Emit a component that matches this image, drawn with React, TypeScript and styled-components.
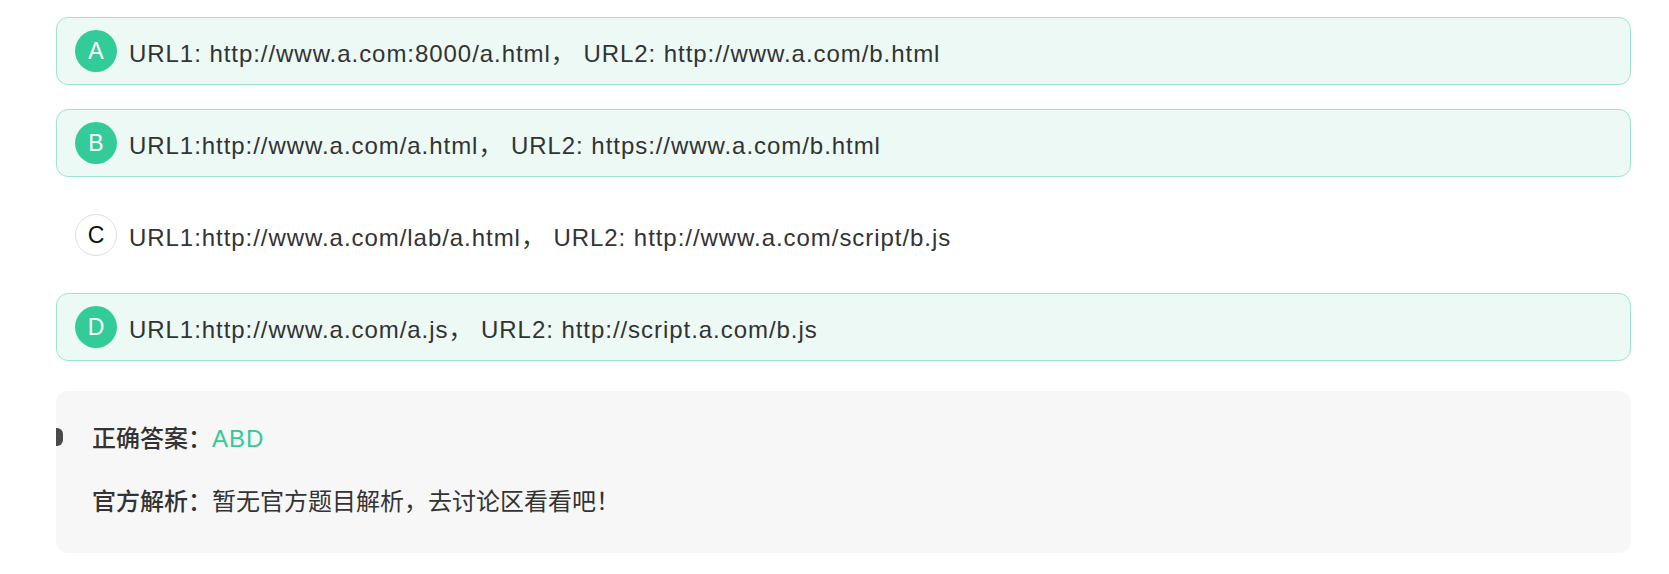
import React from "react";
import styled, { createGlobalStyle, css } from "styled-components";

const GlobalStyle = createGlobalStyle`
  body {
    margin: 0;
    background: #fff;
    font-family: "Liberation Sans", "Noto Sans CJK SC", sans-serif;
    color: #333;
  }
`;

const Page = styled.div`
  padding: 17px 38px 20px 56px;
  display: flex;
  flex-direction: column;
`;

const OptionList = styled.div`
  display: flex;
  flex-direction: column;
  gap: 24px;
`;

const OptionRow = styled.div<{ $selected: boolean }>`
  height: 68px;
  box-sizing: border-box;
  display: flex;
  align-items: center;
  gap: 12px;
  padding-left: 18px;
  border-radius: 12px;
  border: 1px solid transparent;
  ${(p) =>
    p.$selected &&
    css`
      background: #ecf9f5;
      border-color: #9fe4cb;
    `};
`;

const Letter = styled.span<{ $selected: boolean }>`
  width: 42px;
  height: 42px;
  box-sizing: border-box;
  border-radius: 50%;
  display: flex;
  align-items: center;
  justify-content: center;
  font-size: 23px;
  flex-shrink: 0;
  ${(p) =>
    p.$selected
      ? css`
          background: #33cb98;
          color: #fff;
        `
      : css`
          background: #fff;
          color: #111;
          border: 1px solid #dedede;
        `};
`;

const OptionText = styled.span`
  font-size: 24px;
  letter-spacing: 0.95px;
  color: #333;
  white-space: pre;
`;

const Analysis = styled.div`
  position: relative;
  overflow: hidden;
  margin-top: 30px;
  background: #f7f7f7;
  border-radius: 12px;
  padding: 34px 36px 41px;
  display: flex;
  flex-direction: column;
  gap: 37px;
`;

const Marker = styled.span`
  position: absolute;
  left: -9px;
  top: 37px;
  width: 16px;
  height: 18px;
  border-radius: 6px;
  background: #4a4a4a;
`;

const InfoLine = styled.div`
  font-size: 24px;
  line-height: 24px;
  color: #333;
  font-family: "Noto Sans CJK SC", "Liberation Sans", sans-serif;
`;

const Label = styled.span`
  font-weight: 500;
`;

const Answer = styled.span`
  color: #33c999;
  font-family: "Liberation Sans", sans-serif;
  letter-spacing: 0.95px;
`;

const options = [
  { key: "A", text: "URL1: http://www.a.com:8000/a.html， URL2: http://www.a.com/b.html", selected: true },
  { key: "B", text: "URL1:http://www.a.com/a.html， URL2: https://www.a.com/b.html", selected: true },
  { key: "C", text: "URL1:http://www.a.com/lab/a.html， URL2: http://www.a.com/script/b.js", selected: false },
  { key: "D", text: "URL1:http://www.a.com/a.js， URL2: http://script.a.com/b.js", selected: true },
];

export default function App() {
  return (
    <>
      <GlobalStyle />
      <Page>
        <OptionList>
          {options.map((o) => (
            <OptionRow key={o.key} $selected={o.selected}>
              <Letter $selected={o.selected}>{o.key}</Letter>
              <OptionText>{o.text}</OptionText>
            </OptionRow>
          ))}
        </OptionList>
        <Analysis>
          <Marker />
          <InfoLine>
            <Label>正确答案：</Label>
            <Answer>ABD</Answer>
          </InfoLine>
          <InfoLine>
            <Label>官方解析：</Label>暂无官方题目解析，去讨论区看看吧！
          </InfoLine>
        </Analysis>
      </Page>
    </>
  );
}
